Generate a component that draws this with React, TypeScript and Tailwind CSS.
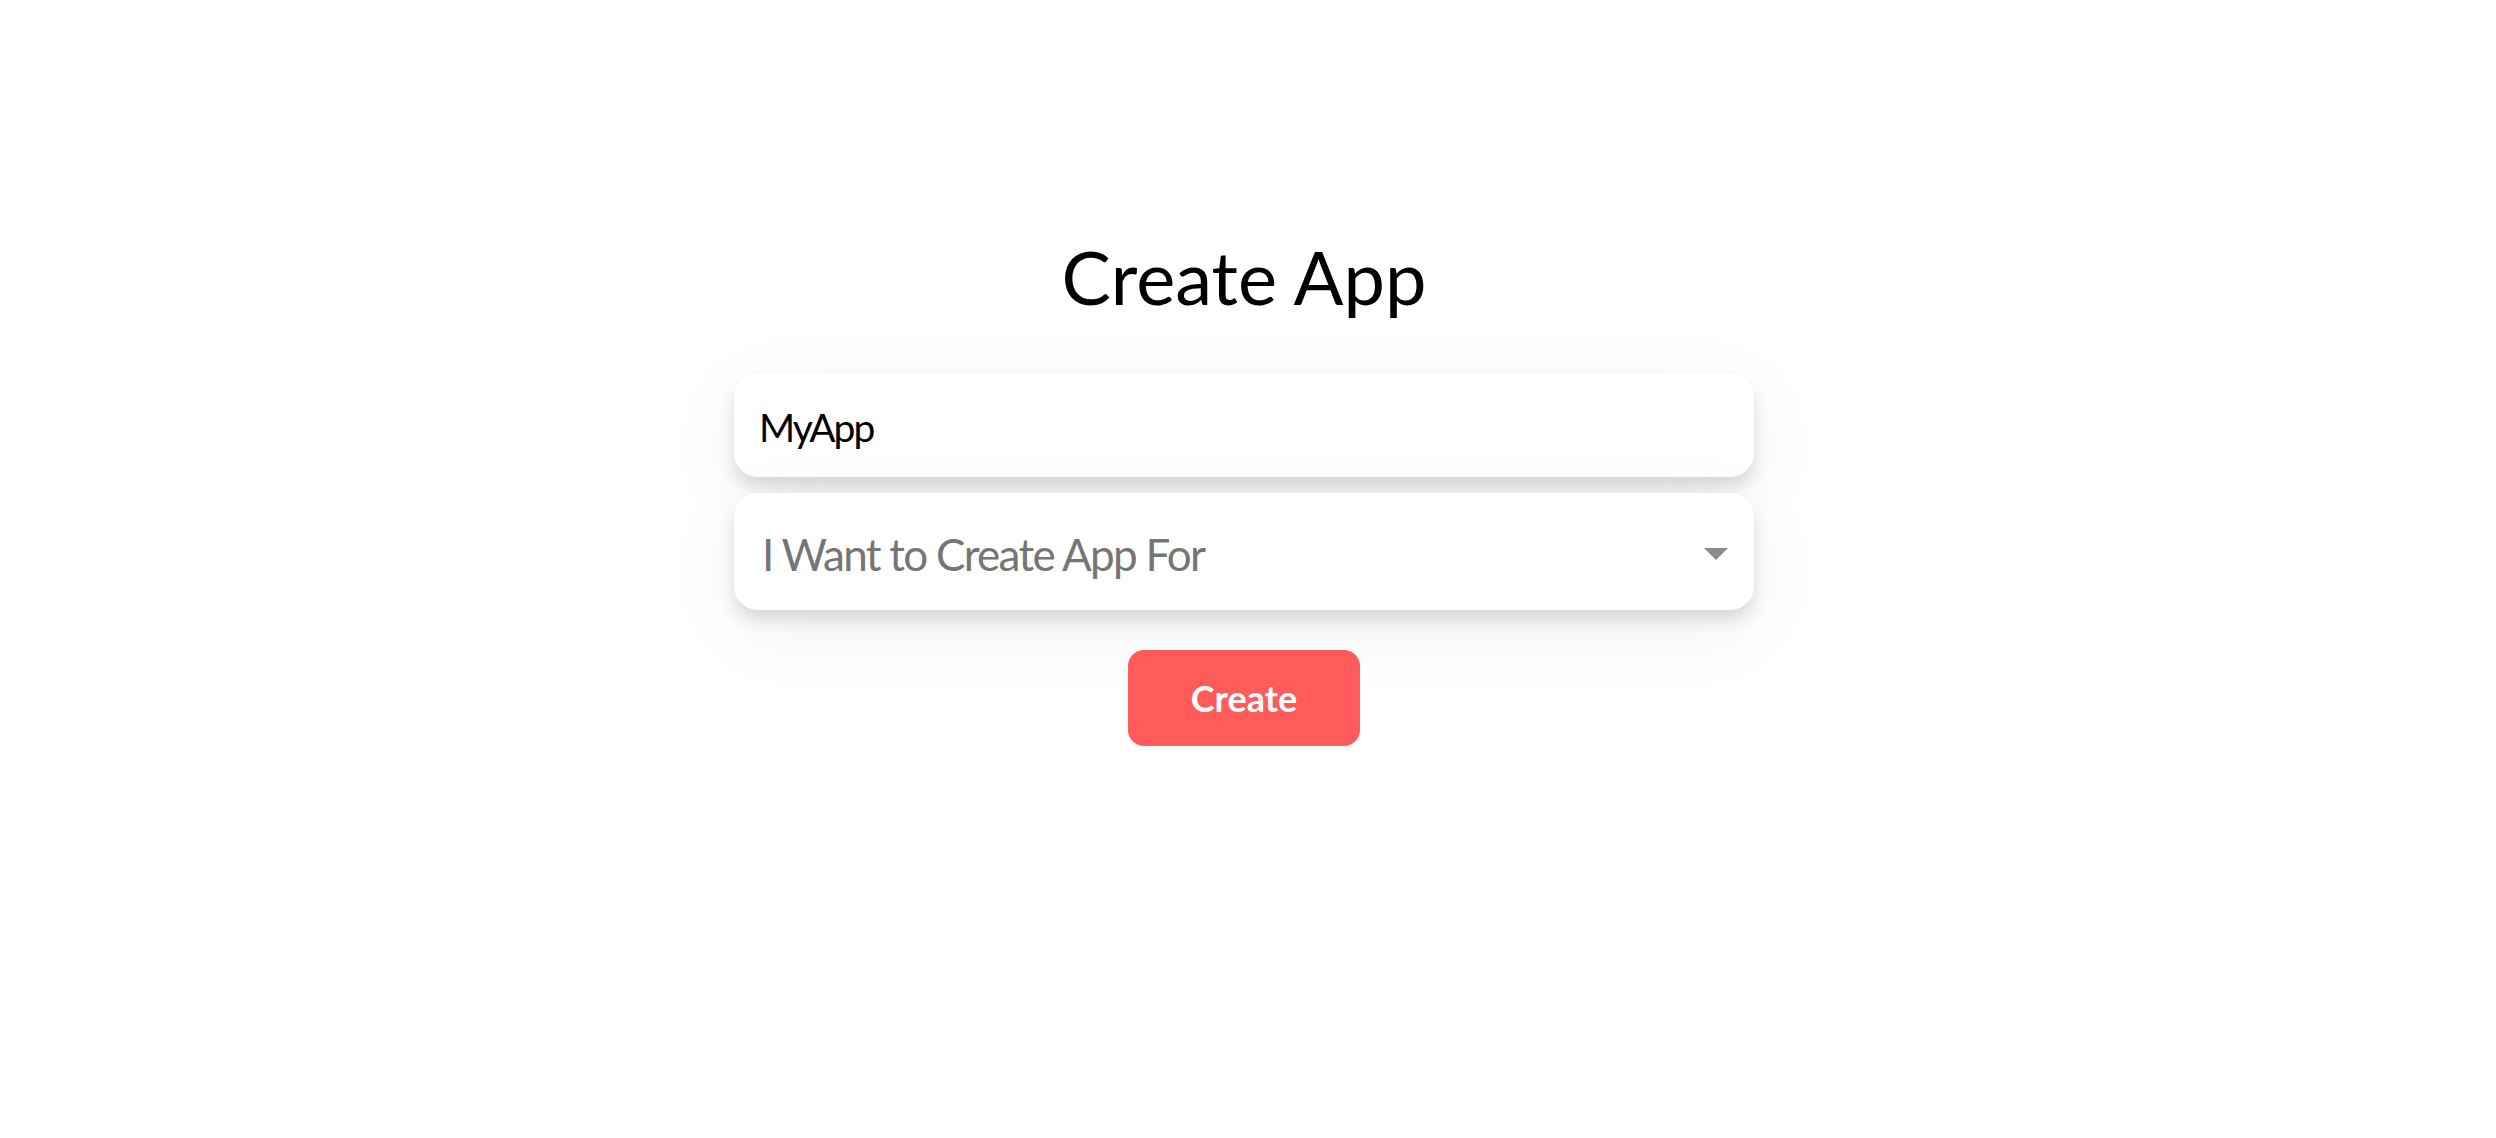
export default function App() {
    return (
        <div className="min-h-screen bg-white flex justify-center pr-2 font-['Lato',sans-serif]">
            <div className="w-[1020px] pt-[240px] flex flex-col items-center">
                <h1 className="text-[74px] leading-none font-normal text-black">Create App</h1>

                {/* App name */}
                <input
                    defaultValue="MyApp"
                    className="mt-[59px] w-full h-[104px] rounded-[24px] bg-white px-[25px] pt-1 text-[39px] tracking-[-2px] text-black outline-none shadow-[0_10px_16px_rgba(0,0,0,0.12),0_20px_80px_rgba(0,0,0,0.06)]"
                />

                {/* Purpose select */}
                <div className="mt-4 w-full h-[117px] rounded-[24px] bg-white pl-[28px] pr-[26px] pt-1 flex items-center justify-between shadow-[0_10px_16px_rgba(0,0,0,0.12),0_20px_80px_rgba(0,0,0,0.06)]">
                    <span className="text-[44px] tracking-[-1.7px] text-[#757575]">I Want to Create App For</span>
                    <svg className="w-6 h-3 text-[#8a8a8a]" viewBox="0 0 24 12" fill="currentColor">
                        <path d="M0 0h24L12 12z" />
                    </svg>
                </div>

                <button className="mt-[40px] w-[232px] h-[96px] rounded-[16px] bg-[#ff5b5b] text-white font-bold text-[36px]">
                    Create
                </button>
            </div>
        </div>
    );
}
